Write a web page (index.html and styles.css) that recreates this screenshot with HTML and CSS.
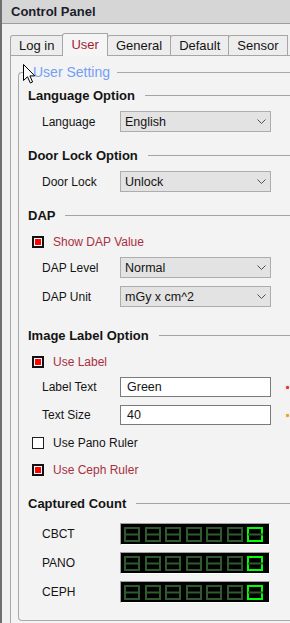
FILE: index.html
```html
<!DOCTYPE html>
<html lang="en">
<head>
  <meta charset="UTF-8">
  <title>Control Panel</title>
  <meta name="viewport" content="width=device-width, initial-scale=1">
  <link rel="stylesheet" href="styles.css">
</head>
<body>
  <div class="window">
    <div class="titlebar">Control Panel</div>

    <div class="tabs">
      <div class="tab">Log in</div>
      <div class="tab active">User</div>
      <div class="tab">General</div>
      <div class="tab">Default</div>
      <div class="tab">Sensor</div>
    </div>

    <div class="panel">
      <fieldset class="group">
        <legend>User Setting</legend>

        <div class="section">
          <div class="head">Language Option</div>
          <div class="field">
            <label>Language</label>
            <div class="select"><span>English</span><svg width="9" height="5" viewBox="0 0 9 5"><polyline points="0.5,0.5 4.5,4.5 8.5,0.5" /></svg></div>
          </div>
        </div>

        <div class="section">
          <div class="head">Door Lock Option</div>
          <div class="field">
            <label>Door Lock</label>
            <div class="select"><span>Unlock</span><svg width="9" height="5" viewBox="0 0 9 5"><polyline points="0.5,0.5 4.5,4.5 8.5,0.5" /></svg></div>
          </div>
        </div>

        <div class="section">
          <div class="head">DAP</div>
          <div class="check on"><span class="box"></span>Show DAP Value</div>
          <div class="field">
            <label>DAP Level</label>
            <div class="select"><span>Normal</span><svg width="9" height="5" viewBox="0 0 9 5"><polyline points="0.5,0.5 4.5,4.5 8.5,0.5" /></svg></div>
          </div>
          <div class="field">
            <label>DAP Unit</label>
            <div class="select"><span>mGy x cm^2</span><svg width="9" height="5" viewBox="0 0 9 5"><polyline points="0.5,0.5 4.5,4.5 8.5,0.5" /></svg></div>
          </div>
        </div>

        <div class="section label-opts">
          <div class="head">Image Label Option</div>
          <div class="check on"><span class="box"></span>Use Label</div>
          <div class="field">
            <label>Label Text</label>
            <div class="input">Green</div>
            <span class="swatch red"></span>
          </div>
          <div class="field">
            <label>Text Size</label>
            <div class="input">40</div>
            <span class="swatch orange"></span>
          </div>
          <div class="check"><span class="box"></span>Use Pano Ruler</div>
          <div class="check on"><span class="box"></span>Use Ceph Ruler</div>
        </div>

        <div class="section counts">
          <div class="head">Captured Count</div>
          <div class="counter">
            <label>CBCT</label>
            <div class="led" data-count="0"></div>
          </div>
          <div class="counter">
            <label>PANO</label>
            <div class="led" data-count="0"></div>
          </div>
          <div class="counter">
            <label>CEPH</label>
            <div class="led" data-count="0"></div>
          </div>
        </div>
      </fieldset>
    </div>

    <svg class="cursor" width="13" height="20" viewBox="0 0 13 20">
      <path d="M0.5 0.5 L0.5 16.5 L4.5 12.8 L7.3 19 L9.6 18 L6.9 11.9 L11.8 11.9 Z" />
    </svg>
  </div>

  <script>
    // seven-digit counters, only the last digit lit
    const digit = (lit) => `
      <svg width="16" height="15" viewBox="0 0 16 15">
        <rect x="1" y="1" width="14" height="13" stroke="${lit ? '#00ff00' : '#2e5a2e'}" />
        <line x1="1" y1="7.5" x2="${lit ? 16 : 15}" y2="7.5" stroke="#2e5a2e" />
      </svg>`;

    document.querySelectorAll('.led').forEach(led => {
      let html = '';
      for (let i = 0; i < 7; i++) html += digit(i === 6);
      led.innerHTML = html;
    });
  </script>
</body>
</html>
```

FILE: styles.css
```css
body {
  margin: 0;
  background: #f0f0f0;
  font-family: "Liberation Sans", Arial, sans-serif;
  color: #141414;
}
.window {
  position: relative;
  width: 288px;
  height: 623px;
  overflow: hidden;
  border-left: 2px solid #6e6e6e;
  background: #f0f0f0;
}
.titlebar {
  height: 23px;
  line-height: 24px;
  padding-left: 9px;
  background: #d6d6d6;
  border-bottom: 1px solid #9e9e9e;
  font-size: 13px;
  font-weight: bold;
  color: #1c1c2c;
}
.tabs {
  display: flex;
  align-items: flex-end;
  height: 22px;
  margin-top: 9px;
  padding-left: 8px;
}
.tab {
  box-sizing: border-box;
  height: 20px;
  line-height: 19px;
  padding: 0 8px 0 8px;
  margin-right: -1px;
  border: 1px solid #a6a6a6;
  border-bottom: none;
  border-top-left-radius: 3px;
  background: #ededed;
  font-size: 13px;
  white-space: nowrap;
}
.tab.active {
  position: relative;
  z-index: 1;
  height: 23px;
  margin-bottom: -1px;
  line-height: 21px;
  background: #f5f5f5;
  color: #a01d36;
}
.panel {
  margin-left: 8px;
  margin-right: -30px;
  padding: 8px 0 12px 7px;
  border: 1px solid #a6a6a6;
  background: #f3f3f3;
}
.group {
  margin: 0 -10px 0 0;
  min-width: 0;
  padding: 7px 0 17px 9px;
  border: 1px solid #a9a9a9;
  border-right: none;
  border-radius: 4px 0 0 4px;
}
.group legend {
  margin-left: 3px;
  padding: 0 7px 0 2px;
  line-height: 16px;
  font-size: 14px;
  color: #73a0f5;
}
.section + .section {
  margin-top: 15px;
}
.section.label-opts {
  margin-top: 20px;
}
.section.counts {
  margin-top: 17px;
}
.head {
  display: flex;
  align-items: center;
  gap: 10px;
  height: 16px;
  font-size: 13px;
  font-weight: bold;
  white-space: nowrap;
}
.head::after {
  content: "";
  flex: 1;
  height: 1px;
  background: #a3a3a3;
}
.field, .counter {
  display: flex;
  align-items: center;
  padding-left: 14px;
  font-size: 12px;
}
.field label, .counter label {
  width: 78px;
  flex: none;
}
.select {
  box-sizing: border-box;
  display: flex;
  align-items: center;
  justify-content: space-between;
  width: 151px;
  height: 21px;
  padding: 0 4px 0 4px;
  border: 1px solid #adadad;
  background: #e3e3e3;
  font-size: 12.5px;
}
.select svg {
  fill: none;
  stroke: #505050;
  stroke-width: 1;
}
.input {
  box-sizing: border-box;
  width: 151px;
  height: 20px;
  line-height: 18px;
  padding-left: 6px;
  border: 1px solid #7a7a7a;
  background: #fff;
  font-size: 12.5px;
}
.swatch {
  flex: none;
  width: 3px;
  height: 3px;
  margin-left: 15px;
  border-radius: 1px;
}
.swatch.red { background: #f03030; box-shadow: 0 0 3px #c8c8c8; }
.swatch.orange { background: #f0a020; box-shadow: 0 0 3px #d8d8d8; }
.check {
  display: flex;
  align-items: center;
  gap: 9px;
  height: 16px;
  padding-left: 4px;
  font-size: 12px;
}
.check .box {
  box-sizing: border-box;
  width: 12px;
  height: 12px;
  border: 1px solid #1e1e1e;
  background: #fff;
}
.check.on {
  color: #a8303e;
}
.check.on .box {
  border: 2px solid #111;
  box-shadow: inset 0 0 0 1px #fff;
  background: #ff0000;
}
.head + .field { margin-top: 8px; }
.head + .check { margin-top: 11px; }
.check + .field { margin-top: 7px; }
.field + .field { margin-top: 8px; }
.field + .check { margin-top: 10px; }
.check + .check { margin-top: 11px; }
.head + .counter { margin-top: 12px; }
.counter + .counter { margin-top: 7px; }
.led {
  box-sizing: border-box;
  display: flex;
  align-items: center;
  justify-content: space-between;
  width: 150px;
  height: 22px;
  padding: 0 6px 0 3px;
  background: #000;
  border-top: 1px solid #a0a0a0;
  border-left: 1px solid #a0a0a0;
  border-right: 1px solid #fff;
  border-bottom: 1px solid #fff;
}
.led svg {
  fill: none;
  stroke-width: 2;
}
.cursor {
  position: absolute;
  left: 21px;
  top: 64px;
}
.cursor path {
  fill: #fff;
  stroke: #000;
  stroke-width: 1;
}
```
